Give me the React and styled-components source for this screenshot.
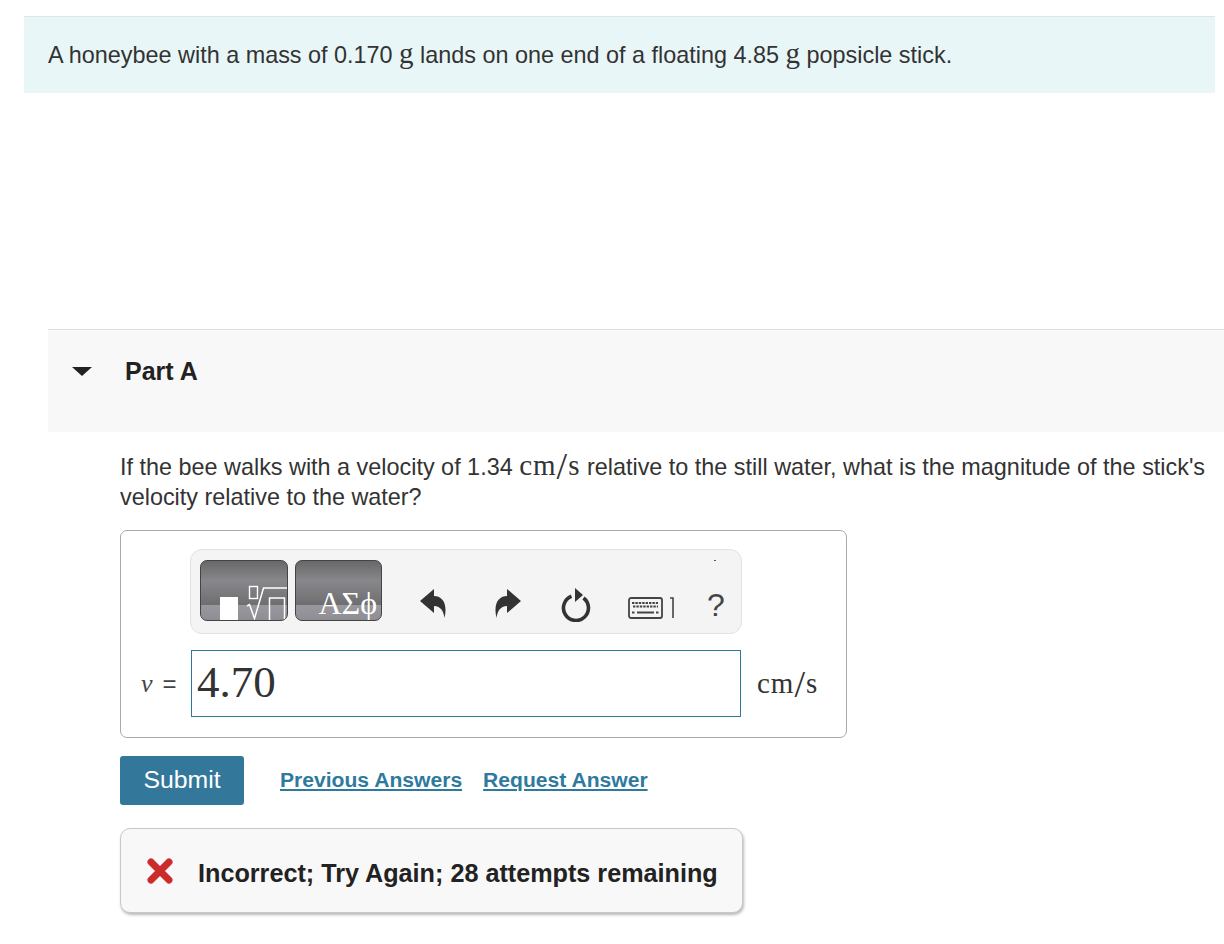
import React from "react";
import styled, { createGlobalStyle } from "styled-components";

const Global = createGlobalStyle`
  html, body { margin: 0; padding: 0; background: #fff; }
  body { font-family: "Liberation Sans", Arial, sans-serif; color: #333; }
`;
const Page = styled.div`
  width: 1224px; height: 944px; overflow: hidden; padding-top: 16px; box-sizing: border-box;
`;
const Intro = styled.div`
  margin-left: 24px; width: 1191px; height: 77px; box-sizing: border-box;
  padding: 0 24px 3px; display: flex; align-items: center;
  background: #e9f6f8; border-top: 1px solid #dfe6e8;
  font-size: 23.4px; color: #333;
`;
const Grams = styled.span`
  font-family: "Liberation Serif", "Times New Roman", serif;
  font-size: 29px;
`;
const Unit = styled.span`
  font-family: "Liberation Serif", "Times New Roman", serif;
  font-size: 29px; line-height: 0; white-space: nowrap; color: #333; letter-spacing: 1px;
`;
const Slash = styled.span`
  font-size: 38px; line-height: 0; vertical-align: -4px;
`;
const Section = styled.section`
  margin: 236px 0 0 48px;
`;
const PartHeader = styled.div`
  height: 103px; box-sizing: border-box; padding: 25px 0 0 24px;
  display: flex; align-items: flex-start; gap: 33px;
  background: #f8f8f8; border-top: 1px solid #e0e0e0;
`;
const Triangle = styled.span`
  width: 0; height: 0; margin-top: 12px;
  border-left: 10px solid transparent; border-right: 10px solid transparent;
  border-top: 9px solid #222;
`;
const PartTitle = styled.h2`
  margin: 0; font-size: 25px; line-height: 32px; font-weight: 700; color: #222;
`;
const Body = styled.div`
  padding-left: 72px;
`;
const Question = styled.p`
  margin: 20px 0 0; width: 1100px; font-size: 23.4px; line-height: 30px; color: #333;
`;
const AnswerBox = styled.div`
  margin-top: 18px; width: 727px; height: 208px; box-sizing: border-box;
  border: 1px solid #aaa; border-radius: 7px; padding: 18px 0 0 69px; position: relative;
`;
const Toolbar = styled.div`
  width: 552px; height: 85px; box-sizing: border-box; background: #f4f4f4;
  border: 1px solid #e2e2e2; border-radius: 12px; display: flex; align-items: flex-start;
  padding: 10px 0 0 9px; position: relative;
`;
const TemplateButton = styled.div`
  width: ${p => p.$w}px; height: 61px; box-sizing: border-box; margin-right: 7px;
  border: 1px solid #444; border-radius: 7px; overflow: hidden; position: relative; flex: none;
  background: linear-gradient(#68686a 0, #88888c 20px, #6e6e70 44px, #98989e 44px, #8e8e94 100%);
  color: #fff; display: flex; align-items: flex-end; justify-content: flex-end; padding-right: 4px;
`;
const Greek = styled.span`
  font-family: "Liberation Serif", serif; font-size: 32px; line-height: 42px; color: #fff;
  white-space: nowrap; margin-bottom: -4px;
`;
const Tool = styled.div`
  position: absolute; top: ${p => p.$top}px; left: ${p => p.$left}px; color: #333;
  line-height: 0;
`;
const Help = styled.span`
  font-size: 32px; line-height: 34px; color: #444;
`;
const Dot = styled.span`
  position: absolute; top: 10px; left: 523px; width: 2px; height: 1px; background: #555;
`;
const InputRow = styled.div`
  margin: 16px 0 0 -49px; display: flex; align-items: center;
`;
const Label = styled.label`
  width: 50px; box-sizing: border-box; font-size: 24px; color: #444; white-space: nowrap;
`;
const VarI = styled.i`
  font-family: "Liberation Serif", serif; font-size: 26px; margin-right: 10px;
`;
const Input = styled.div`
  width: 550px; height: 67px; box-sizing: border-box; border: 1px solid #2e7a9b;
  padding: 0 0 4px 5px; display: flex; align-items: center;
  font-family: "Liberation Serif", serif; font-size: 45px; color: #333;
`;
const UnitSlot = styled.span`
  margin-left: 16px; padding-top: 8px; line-height: 30px;
`;
const Actions = styled.div`
  margin-top: 18px; display: flex; align-items: center;
`;
const Submit = styled.button`
  width: 124px; height: 49px; border: 0; border-radius: 3px; padding: 0 0 2px; background: #33789b; color: #fff;
  font-family: "Liberation Sans", sans-serif; font-size: 24.8px;
`;
const ActionLink = styled.a`
  font-size: 21.1px; font-weight: 700; color: #2e7a9e; text-decoration: underline; margin-left: ${p => p.$ml}px;
  text-underline-offset: 2px; padding-bottom: 2px;
`;
const Feedback = styled.div`
  margin-top: 23px; width: 623px; height: 85px; box-sizing: border-box;
  background: #f8f8f8; border: 1px solid #c8c8c8; border-radius: 10px;
  box-shadow: 1px 2px 3px rgba(0,0,0,.28);
  display: flex; align-items: center; padding-left: 26px; gap: 25px;
  font-size: 25.2px; font-weight: 700; color: #222; white-space: nowrap;
`;
const FeedbackText = styled.span`
  padding-top: 5px;
`;

const Sqrt = () => (
  <svg width="68" height="40" viewBox="0 0 68 40" style={{ position: "absolute", left: 19, bottom: 0 }}>
    <rect x="0" y="17" width="18" height="23" fill="#fff" />
    <rect x="29.5" y="6.5" width="8" height="12" fill="none" stroke="#fff" strokeWidth="1.4" />
    <path d="M27 26l2.5 -1.5 5 14 9 -30.5h24" fill="none" stroke="#fff" strokeWidth="1.5" />
    <path d="M49.5 40v-22h15v22" fill="none" stroke="#fff" strokeWidth="1.5" />
  </svg>
);
const Undo = ({ flip }) => (
  <svg width="26" height="29" viewBox="0 0 26 29" style={flip ? { transform: "scaleX(-1)" } : undefined}>
    <path d="M0 12L14 0v7C22 7 28 14 24.5 29 23.5 22 21 17.5 14 17v7z" fill="#333" />
  </svg>
);
const Reset = () => (
  <svg width="32" height="34" viewBox="0 0 32 34">
    <path d="M11.5 8.3A12.5 12.5 0 1 0 23.5 10" fill="none" stroke="#333" strokeWidth="3.6" />
    <path d="M15 0l8 7-8 7z" fill="#333" />
  </svg>
);
const Keyboard = () => (
  <svg width="48" height="24" viewBox="0 0 48 24">
    <rect x="1" y="2" width="33" height="20" rx="2" fill="#f4f4f4" stroke="#444" strokeWidth="1.8" />
    <path d="M4 7h26M5 10.5h25" stroke="#444" strokeWidth="2.2" strokeDasharray="2.4 1" />
    <path d="M4 16.5h2.5M9 16.5h17M28 16.5h2.5" stroke="#444" strokeWidth="2.2" />
    <path d="M42 2h3v20" fill="none" stroke="#444" strokeWidth="1.6" />
  </svg>
);
const Cross = () => (
  <svg width="26" height="26" viewBox="0 0 26 26" style={{ flex: "none" }}>
    <path d="M4 4l18 18M22 4l-18 18" stroke="#cc2b2b" strokeWidth="7" strokeLinecap="round" />
  </svg>
);
const CmPerS = () => (
  <Unit>cm<Slash>/</Slash>s</Unit>
);

export default function App() {
  return (
    <Page>
      <Global />
      <Intro>
        <span>A honeybee with a mass of 0.170 <Grams>g</Grams> lands on one end of a floating 4.85 <Grams>g</Grams> popsicle stick.</span>
      </Intro>
      <Section>
        <PartHeader>
          <Triangle />
          <PartTitle>Part A</PartTitle>
        </PartHeader>
        <Body>
          <Question>
            If the bee walks with a velocity of 1.34 <CmPerS /> relative to the still water, what is the magnitude of the stick's velocity relative to the water?
          </Question>
          <AnswerBox>
            <Toolbar>
              <TemplateButton $w={88}><Sqrt /></TemplateButton>
              <TemplateButton $w={87}><Greek>ΑΣϕ</Greek></TemplateButton>
              <Tool $left={229} $top={39}><Undo /></Tool>
              <Tool $left={304} $top={39}><Undo flip /></Tool>
              <Tool $left={369} $top={38}><Reset /></Tool>
              <Tool $left={437} $top={46}><Keyboard /></Tool>
              <Tool $left={516} $top={38}><Help>?</Help></Tool>
              <Dot />
            </Toolbar>
            <InputRow>
              <Label><VarI>v</VarI>=</Label>
              <Input>4.70</Input>
              <UnitSlot><CmPerS /></UnitSlot>
            </InputRow>
          </AnswerBox>
          <Actions>
            <Submit>Submit</Submit>
            <ActionLink $ml={36}>Previous Answers</ActionLink>
            <ActionLink $ml={21}>Request Answer</ActionLink>
          </Actions>
          <Feedback>
            <Cross />
            <FeedbackText>Incorrect; Try Again; 28 attempts remaining</FeedbackText>
          </Feedback>
        </Body>
      </Section>
    </Page>
  );
}
